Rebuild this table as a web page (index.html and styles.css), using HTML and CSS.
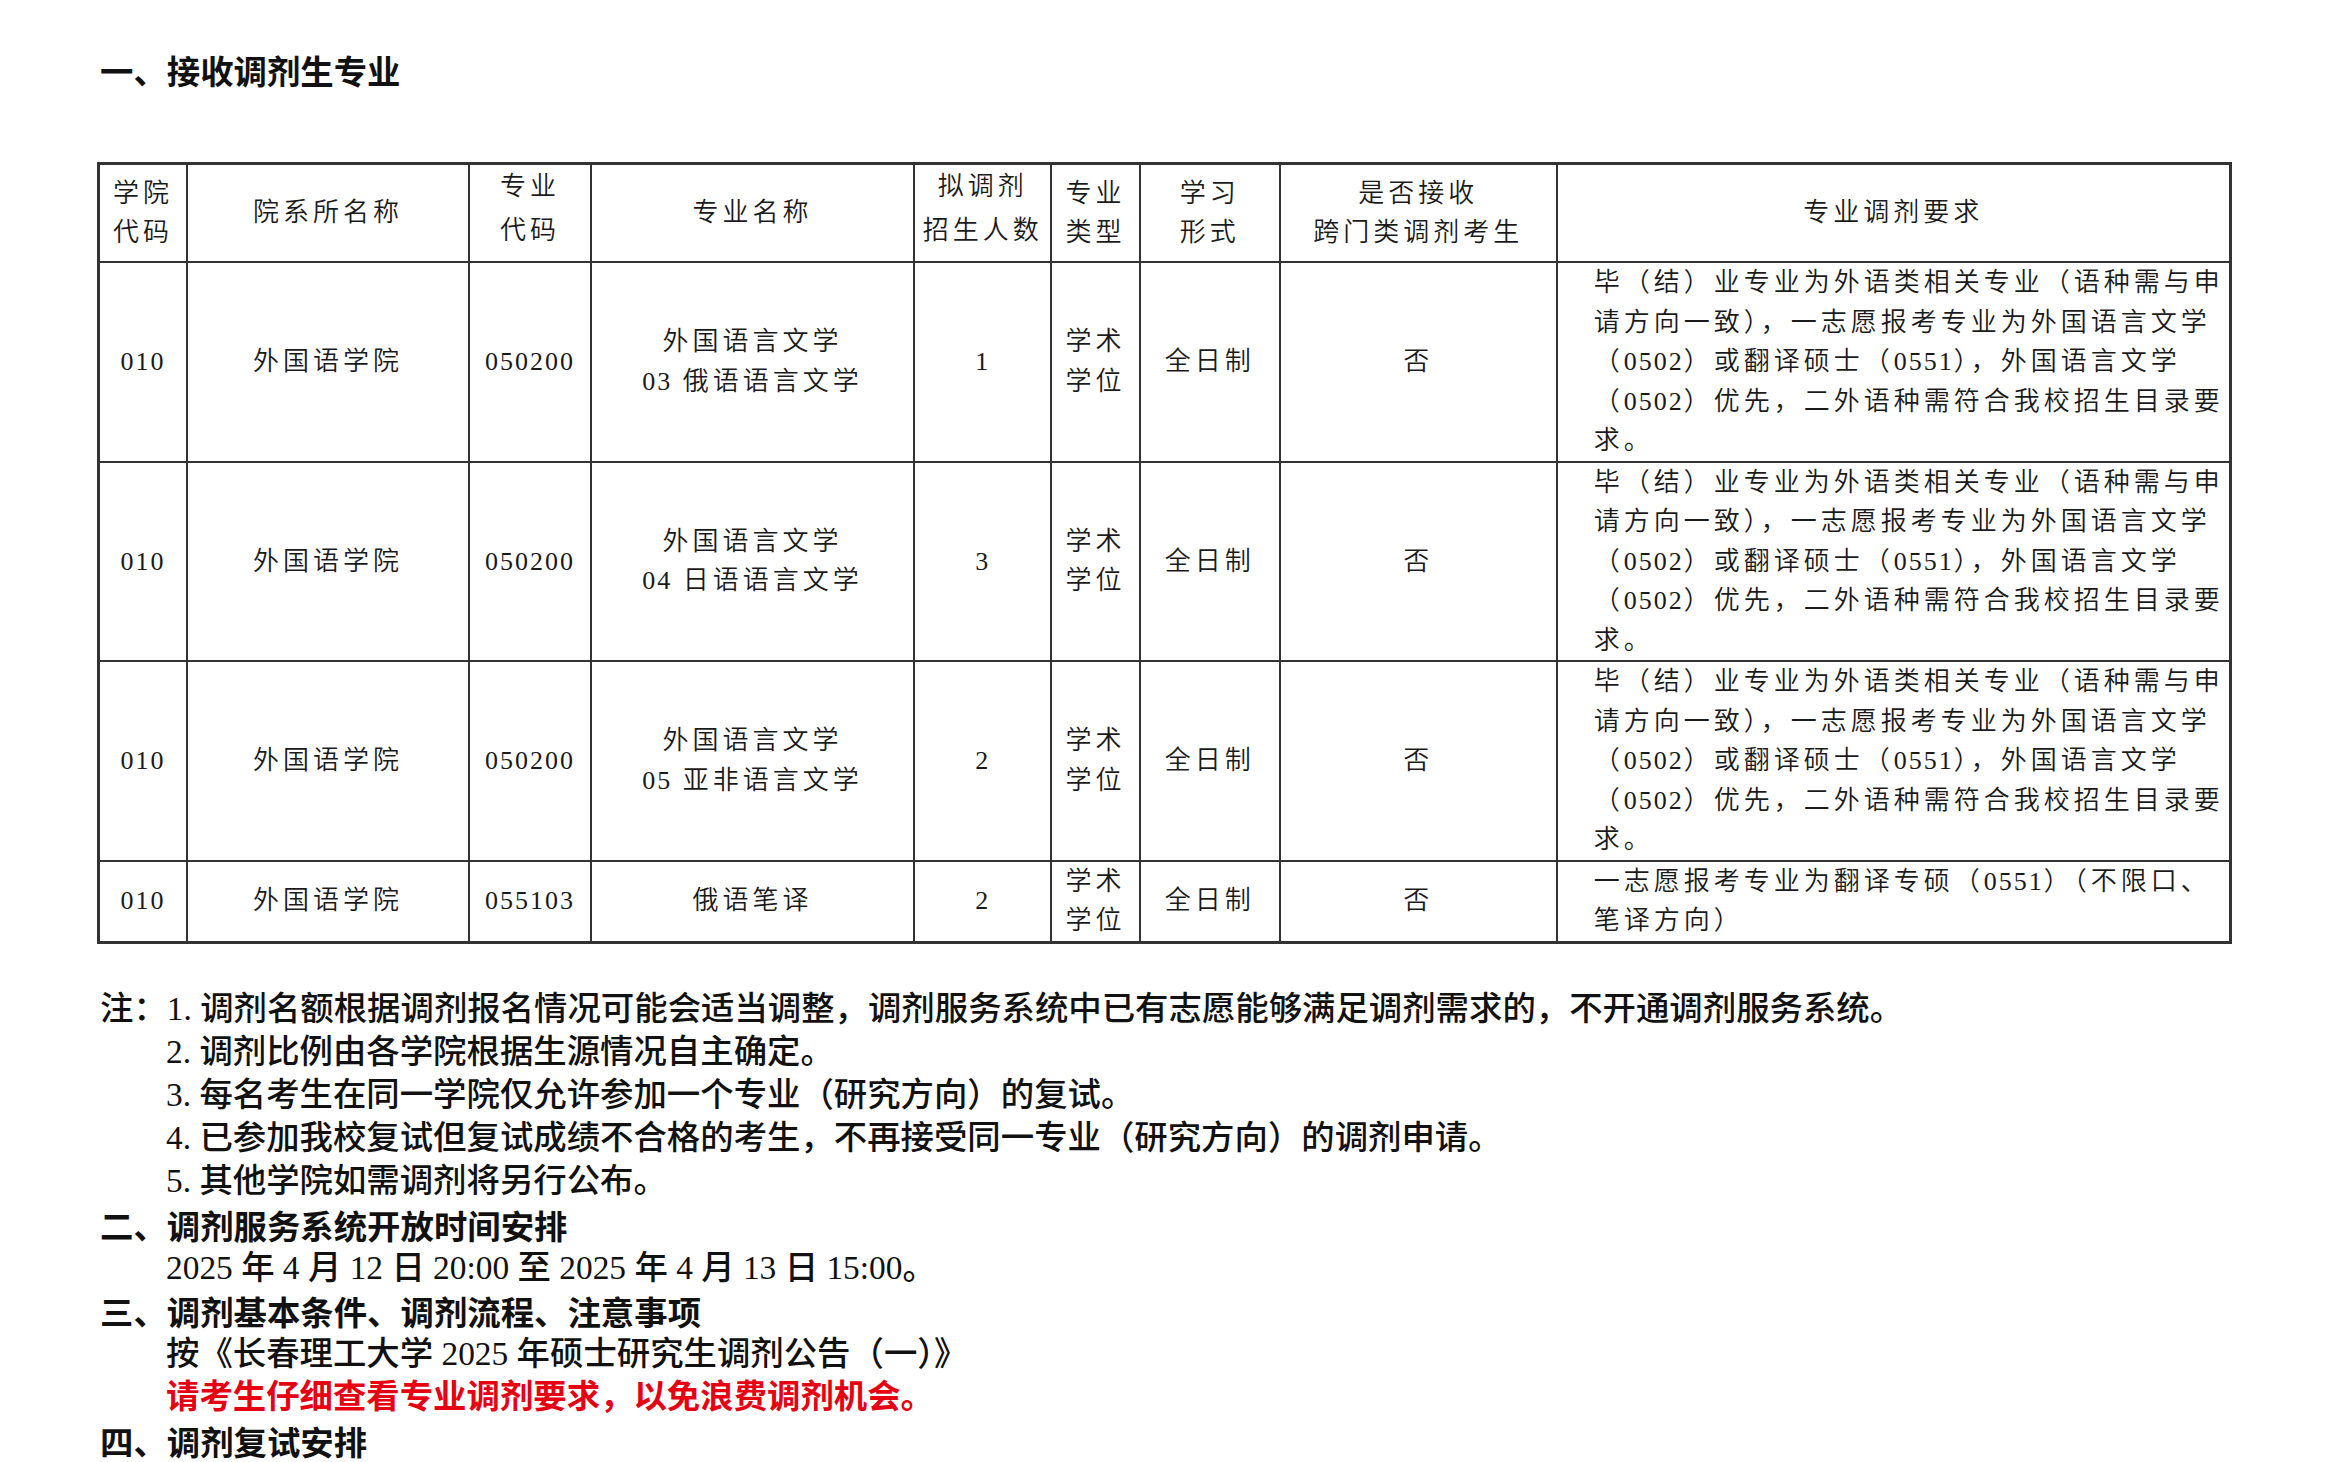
FILE: index.html
```html
<!DOCTYPE html>
<html lang="zh-CN">
<head>
<meta charset="utf-8">
<title>接收调剂生专业</title>
<link rel="stylesheet" href="styles.css">
</head>
<body>
<div class="page">
  <h1 class="title">一、接收调剂生专业</h1>

  <table class="plan">
    <colgroup>
      <col class="c1"><col class="c2"><col class="c3"><col class="c4"><col class="c5">
      <col class="c6"><col class="c7"><col class="c8"><col class="c9">
    </colgroup>
    <thead>
      <tr class="row-head">
        <th>学院<br>代码</th>
        <th>院系所名称</th>
        <th class="tight">专业<br>代码</th>
        <th>专业名称</th>
        <th class="tight">拟调剂<br>招生人数</th>
        <th>专业<br>类型</th>
        <th>学习<br>形式</th>
        <th>是否接收<br>跨门类调剂考生</th>
        <th>专业调剂要求</th>
      </tr>
    </thead>
    <tbody>
      <tr class="row-main">
        <td><span class="num">010</span></td>
        <td>外国语学院</td>
        <td><span class="num">050200</span></td>
        <td>外国语言文学<br><span class="num">03</span> 俄语语言文学</td>
        <td><span class="num">1</span></td>
        <td>学术<br>学位</td>
        <td>全日制</td>
        <td>否</td>
        <td class="req">毕（结）业专业为外语类相关专业（语种需与申<br>请方向一致），一志愿报考专业为外国语言文学<br>（<span class="num">0502</span>）或翻译硕士（<span class="num">0551</span>），外国语言文学<br>（<span class="num">0502</span>）优先，二外语种需符合我校招生目录要<br>求。</td>
      </tr>
      <tr class="row-main">
        <td><span class="num">010</span></td>
        <td>外国语学院</td>
        <td><span class="num">050200</span></td>
        <td>外国语言文学<br><span class="num">04</span> 日语语言文学</td>
        <td><span class="num">3</span></td>
        <td>学术<br>学位</td>
        <td>全日制</td>
        <td>否</td>
        <td class="req">毕（结）业专业为外语类相关专业（语种需与申<br>请方向一致），一志愿报考专业为外国语言文学<br>（<span class="num">0502</span>）或翻译硕士（<span class="num">0551</span>），外国语言文学<br>（<span class="num">0502</span>）优先，二外语种需符合我校招生目录要<br>求。</td>
      </tr>
      <tr class="row-main">
        <td><span class="num">010</span></td>
        <td>外国语学院</td>
        <td><span class="num">050200</span></td>
        <td>外国语言文学<br><span class="num">05</span> 亚非语言文学</td>
        <td><span class="num">2</span></td>
        <td>学术<br>学位</td>
        <td>全日制</td>
        <td>否</td>
        <td class="req">毕（结）业专业为外语类相关专业（语种需与申<br>请方向一致），一志愿报考专业为外国语言文学<br>（<span class="num">0502</span>）或翻译硕士（<span class="num">0551</span>），外国语言文学<br>（<span class="num">0502</span>）优先，二外语种需符合我校招生目录要<br>求。</td>
      </tr>
      <tr class="row-short">
        <td><span class="num">010</span></td>
        <td>外国语学院</td>
        <td><span class="num">055103</span></td>
        <td>俄语笔译</td>
        <td><span class="num">2</span></td>
        <td>学术<br>学位</td>
        <td>全日制</td>
        <td>否</td>
        <td class="req">一志愿报考专业为翻译专硕（<span class="num">0551</span>）（不限口、<br>笔译方向）</td>
      </tr>
    </tbody>
  </table>

  <div class="notes">
    <div class="note first"><span class="lead">注：</span><span>1. 调剂名额根据调剂报名情况可能会适当调整，调剂服务系统中已有志愿能够满足调剂需求的，不开通调剂服务系统。</span></div>
    <p class="note">2. 调剂比例由各学院根据生源情况自主确定。</p>
    <p class="note">3. 每名考生在同一学院仅允许参加一个专业（研究方向）的复试。</p>
    <p class="note">4. 已参加我校复试但复试成绩不合格的考生，不再接受同一专业（研究方向）的调剂申请。</p>
    <p class="note">5. 其他学院如需调剂将另行公布。</p>
    <h2 class="section">二、调剂服务系统开放时间安排</h2>
    <p class="note">2025 年 4 月 12 日 20:00 至 2025 年 4 月 13 日 15:00。</p>
    <h2 class="section">三、调剂基本条件、调剂流程、注意事项</h2>
    <p class="note">按《长春理工大学 2025 年硕士研究生调剂公告（一）》</p>
    <p class="note warn">请考生仔细查看专业调剂要求，以免浪费调剂机会。</p>
    <h2 class="section">四、调剂复试安排</h2>
  </div>
</div>
</body>
</html>
```

FILE: styles.css
```css
html, body {
  margin: 0;
  padding: 0;
  background: #ffffff;
}

.page {
  padding: 48px 0 0 97px;
  font-family: "Liberation Serif", "Noto Sans CJK SC", serif;
  color: #111111;
}

.title {
  margin: 0;
  padding-left: 3px;
  font-family: "Noto Sans CJK SC", sans-serif;
  font-size: 33.4px;
  line-height: 43px;
  font-weight: 700;
  color: #111111;
}

.plan {
  margin-top: 71px;
  width: 2135px;
  table-layout: fixed;
  border-collapse: collapse;
  border: 3px solid #333333;
  font-family: "Liberation Serif", "Noto Sans CJK SC", serif;
  font-size: 26px;
  line-height: 39.5px;
  letter-spacing: 4px;
  font-weight: 350;
  color: #1a1a1a;
}

.c1 { width: 88px; }
.c2 { width: 280px; }
.c3 { width: 121px; }
.c4 { width: 321px; }
.c5 { width: 136px; }
.c6 { width: 88px; }
.c7 { width: 139px; }
.c8 { width: 275px; }
.c9 { width: 669px; }

.plan th,
.plan td {
  border: 2px solid #333333;
  padding: 0;
  text-align: center;
  vertical-align: middle;
  white-space: nowrap;
  font-weight: 350;
}

.plan th.tight {
  line-height: 44px;
  padding-bottom: 8px;
}

.row-head { height: 97px; }
.row-main { height: 198px; }
.row-short { height: 79px; }

.plan td.req {
  text-align: left;
  padding-left: 36px;
}

.num {
  letter-spacing: 2px;
}

.notes {
  margin-top: 43px;
  padding-left: 3px;
  font-size: 33.4px;
  line-height: 43.2px;
  color: #111111;
}

.note {
  margin: 0;
  padding-left: 66px;
  font-weight: 500;
  white-space: nowrap;
}

.note.first {
  display: flex;
  padding-left: 0;
}

.lead {
  flex: 0 0 66px;
}

.section {
  margin: 0;
  font-family: "Noto Sans CJK SC", sans-serif;
  font-size: 33.4px;
  line-height: 43.2px;
  font-weight: 700;
  color: #111111;
}

.warn {
  color: #e60012;
  font-weight: 700;
}
```
